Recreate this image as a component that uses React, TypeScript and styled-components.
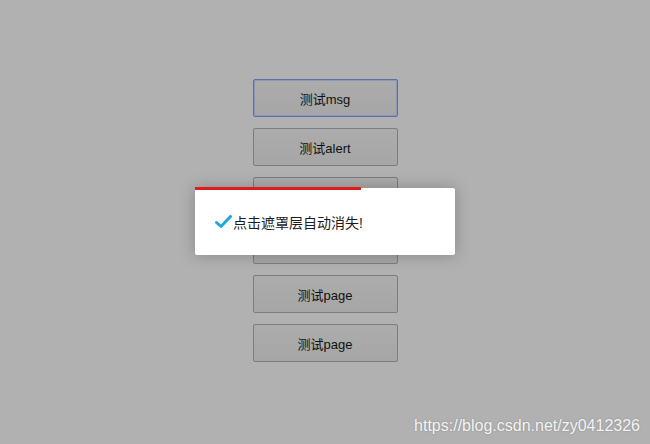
import React from 'react';
import styled, { createGlobalStyle } from 'styled-components';

const GlobalStyle = createGlobalStyle`
  html, body {
    margin: 0;
    padding: 0;
    background: #b1b1b1;
  }
  body {
    font-family: "Liberation Sans", Arial, "Noto Sans CJK SC", sans-serif;
  }
`;

const Page = styled.div`
  position: relative;
  width: 650px;
  height: 444px;
  overflow: hidden;
  background: #b1b1b1;
`;

const ButtonList = styled.div`
  display: flex;
  flex-direction: column;
  align-items: center;
  gap: 11px;
  padding-top: 79px;
`;

const TestButton = styled.button<{ $focused?: boolean }>`
  box-sizing: border-box;
  width: 145px;
  height: 38px;
  padding: 0;
  border: 1px solid ${(p) => (p.$focused ? '#5a6fa6' : '#7d7d7d')};
  box-shadow: ${(p) => (p.$focused ? 'inset 0 0 0 1px #8c97b8' : 'none')};
  border-radius: 2px;
  background: linear-gradient(#acacac, #a6a6a6);
  color: #111;
  font-family: "Liberation Sans", Arial, "Noto Sans CJK SC", sans-serif;
  font-size: 13px;
  cursor: pointer;
`;

const Toast = styled.div`
  position: absolute;
  left: 195px;
  top: 188px;
  width: 260px;
  height: 67px;
  box-sizing: border-box;
  background: #fff;
  border-radius: 2px;
  box-shadow: 0 0 16px rgba(0, 0, 0, 0.25);
  display: flex;
  align-items: center;
  padding-left: 20px;
`;

const Progress = styled.div`
  position: absolute;
  left: 0;
  top: -1px;
  height: 3px;
  background: #e11b1b;
`;

const Message = styled.span`
  display: flex;
  align-items: center;
  gap: 1px;
  color: #1c1c1c;
  font-size: 14px;
  font-family: "Liberation Sans", Arial, "Noto Sans CJK SC", sans-serif;
`;

const Watermark = styled.div`
  position: absolute;
  right: 10px;
  bottom: 9px;
  color: #f4f4f4;
  font-size: 16px;
  font-family: "Liberation Sans", Arial, sans-serif;
  text-shadow: 0 0 2px rgba(0, 0, 0, 0.25);
`;

function CheckIcon() {
  return (
    <svg width="17" height="14" viewBox="0 0 17 14">
      <path
        d="M1.5 7.5 L6 11.5 L15.5 1.5"
        fill="none"
        stroke="#1fa9e1"
        strokeWidth="3"
        strokeLinecap="round"
        strokeLinejoin="round"
      />
    </svg>
  );
}

const buttons = ['测试msg', '测试alert', '测试tips', '测试confirm', '测试page', '测试page'];

export default function App() {
  const progress = 0.64;
  return (
    <Page>
      <GlobalStyle />
      <ButtonList>
        {buttons.map((label, i) => (
          <TestButton key={i} $focused={i === 0}>
            {label}
          </TestButton>
        ))}
      </ButtonList>
      <Toast>
        <Progress style={{ width: `${progress * 100}%` }} />
        <Message>
          <CheckIcon />
          点击遮罩层自动消失!
        </Message>
      </Toast>
      <Watermark>https://blog.csdn.net/zy0412326</Watermark>
    </Page>
  );
}
